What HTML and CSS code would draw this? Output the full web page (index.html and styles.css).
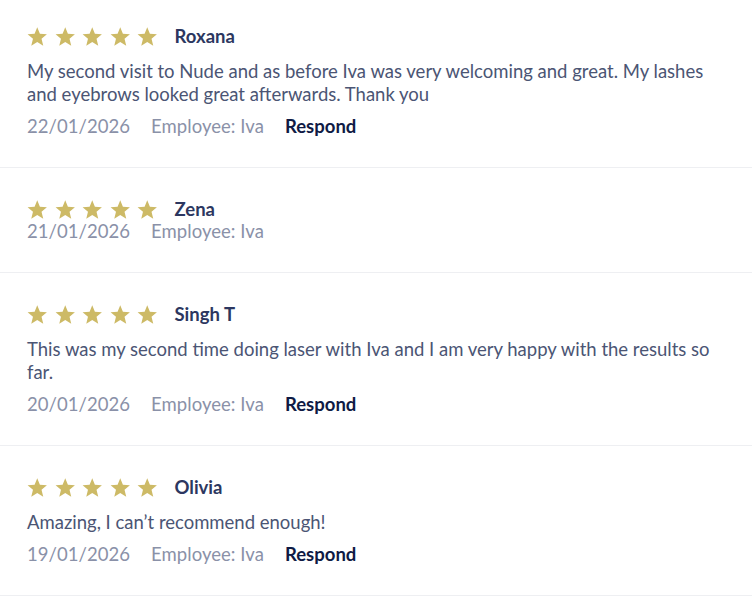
FILE: index.html
```html
<!DOCTYPE html>
<html lang="en">
<head>
<meta charset="utf-8">
<title>Reviews</title>
<link rel="stylesheet" href="styles.css">
</head>
<body>
<div class="reviews">
  <div class="review first">
    <div class="head">
      <div class="stars">
        <svg viewBox="0 0 24 24"><path d="M12 1.5l3.1 7.6 8.2.6-6.3 5.3 2 8L12 18.6 5 23l2-8L.7 9.7l8.2-.6z"/></svg>
        <svg viewBox="0 0 24 24"><path d="M12 1.5l3.1 7.6 8.2.6-6.3 5.3 2 8L12 18.6 5 23l2-8L.7 9.7l8.2-.6z"/></svg>
        <svg viewBox="0 0 24 24"><path d="M12 1.5l3.1 7.6 8.2.6-6.3 5.3 2 8L12 18.6 5 23l2-8L.7 9.7l8.2-.6z"/></svg>
        <svg viewBox="0 0 24 24"><path d="M12 1.5l3.1 7.6 8.2.6-6.3 5.3 2 8L12 18.6 5 23l2-8L.7 9.7l8.2-.6z"/></svg>
        <svg viewBox="0 0 24 24"><path d="M12 1.5l3.1 7.6 8.2.6-6.3 5.3 2 8L12 18.6 5 23l2-8L.7 9.7l8.2-.6z"/></svg>
      </div>
      <span class="name">Roxana</span>
    </div>
    <p class="text">My second visit to Nude and as before Iva was very welcoming and great. My lashes and eyebrows looked great afterwards. Thank you</p>
    <div class="meta"><span class="date">22/01/2026</span><span class="emp">Employee: Iva</span><a class="respond" href="#">Respond</a></div>
  </div>
  <div class="review">
    <div class="head">
      <div class="stars">
        <svg viewBox="0 0 24 24"><path d="M12 1.5l3.1 7.6 8.2.6-6.3 5.3 2 8L12 18.6 5 23l2-8L.7 9.7l8.2-.6z"/></svg>
        <svg viewBox="0 0 24 24"><path d="M12 1.5l3.1 7.6 8.2.6-6.3 5.3 2 8L12 18.6 5 23l2-8L.7 9.7l8.2-.6z"/></svg>
        <svg viewBox="0 0 24 24"><path d="M12 1.5l3.1 7.6 8.2.6-6.3 5.3 2 8L12 18.6 5 23l2-8L.7 9.7l8.2-.6z"/></svg>
        <svg viewBox="0 0 24 24"><path d="M12 1.5l3.1 7.6 8.2.6-6.3 5.3 2 8L12 18.6 5 23l2-8L.7 9.7l8.2-.6z"/></svg>
        <svg viewBox="0 0 24 24"><path d="M12 1.5l3.1 7.6 8.2.6-6.3 5.3 2 8L12 18.6 5 23l2-8L.7 9.7l8.2-.6z"/></svg>
      </div>
      <span class="name">Zena</span>
    </div>
    <div class="meta tight"><span class="date">21/01/2026</span><span class="emp">Employee: Iva</span></div>
  </div>
  <div class="review">
    <div class="head">
      <div class="stars">
        <svg viewBox="0 0 24 24"><path d="M12 1.5l3.1 7.6 8.2.6-6.3 5.3 2 8L12 18.6 5 23l2-8L.7 9.7l8.2-.6z"/></svg>
        <svg viewBox="0 0 24 24"><path d="M12 1.5l3.1 7.6 8.2.6-6.3 5.3 2 8L12 18.6 5 23l2-8L.7 9.7l8.2-.6z"/></svg>
        <svg viewBox="0 0 24 24"><path d="M12 1.5l3.1 7.6 8.2.6-6.3 5.3 2 8L12 18.6 5 23l2-8L.7 9.7l8.2-.6z"/></svg>
        <svg viewBox="0 0 24 24"><path d="M12 1.5l3.1 7.6 8.2.6-6.3 5.3 2 8L12 18.6 5 23l2-8L.7 9.7l8.2-.6z"/></svg>
        <svg viewBox="0 0 24 24"><path d="M12 1.5l3.1 7.6 8.2.6-6.3 5.3 2 8L12 18.6 5 23l2-8L.7 9.7l8.2-.6z"/></svg>
      </div>
      <span class="name">Singh T</span>
    </div>
    <p class="text">This was my second time doing laser with Iva and I am very happy with the results so far.</p>
    <div class="meta"><span class="date">20/01/2026</span><span class="emp">Employee: Iva</span><a class="respond" href="#">Respond</a></div>
  </div>
  <div class="review">
    <div class="head">
      <div class="stars">
        <svg viewBox="0 0 24 24"><path d="M12 1.5l3.1 7.6 8.2.6-6.3 5.3 2 8L12 18.6 5 23l2-8L.7 9.7l8.2-.6z"/></svg>
        <svg viewBox="0 0 24 24"><path d="M12 1.5l3.1 7.6 8.2.6-6.3 5.3 2 8L12 18.6 5 23l2-8L.7 9.7l8.2-.6z"/></svg>
        <svg viewBox="0 0 24 24"><path d="M12 1.5l3.1 7.6 8.2.6-6.3 5.3 2 8L12 18.6 5 23l2-8L.7 9.7l8.2-.6z"/></svg>
        <svg viewBox="0 0 24 24"><path d="M12 1.5l3.1 7.6 8.2.6-6.3 5.3 2 8L12 18.6 5 23l2-8L.7 9.7l8.2-.6z"/></svg>
        <svg viewBox="0 0 24 24"><path d="M12 1.5l3.1 7.6 8.2.6-6.3 5.3 2 8L12 18.6 5 23l2-8L.7 9.7l8.2-.6z"/></svg>
      </div>
      <span class="name">Olivia</span>
    </div>
    <p class="text">Amazing, I can’t recommend enough!</p>
    <div class="meta"><span class="date">19/01/2026</span><span class="emp">Employee: Iva</span><a class="respond" href="#">Respond</a></div>
  </div>
</div>
</body>
</html>
```
FILE: styles.css
```css
html, body {
  margin: 0;
  padding: 0;
  background: #ffffff;
}
body {
  font-family: "Lato", "Noto Sans", sans-serif;
  font-size: 18.5px;
  color: #4b5574;
}
.reviews {
  display: flex;
  flex-direction: column;
}
.review {
  padding: 30px 20px 29px 27px;
  border-bottom: 1px solid #eeeff2;
}
.review.first {
  padding-top: 25px;
}
.head {
  display: flex;
  align-items: center;
  height: 22px;
}
.stars {
  display: flex;
  gap: 7px;
  margin-right: 17px;
}
.stars svg {
  width: 20.5px;
  height: 20.5px;
  fill: #cdba66;
}
.name {
  font-weight: 700;
  color: #2c3760;
}
.text {
  margin: 13px 0 0;
  line-height: 23px;
  color: #4b5574;
}
.meta {
  display: flex;
  gap: 21px;
  margin-top: 9px;
  line-height: 23px;
  color: #8a91a8;
  letter-spacing: 0.05px;
}
.meta.tight {
  margin-top: 0;
}
.respond {
  color: #0f1a45;
  font-weight: 700;
  text-decoration: none;
  letter-spacing: 0;
}
```
